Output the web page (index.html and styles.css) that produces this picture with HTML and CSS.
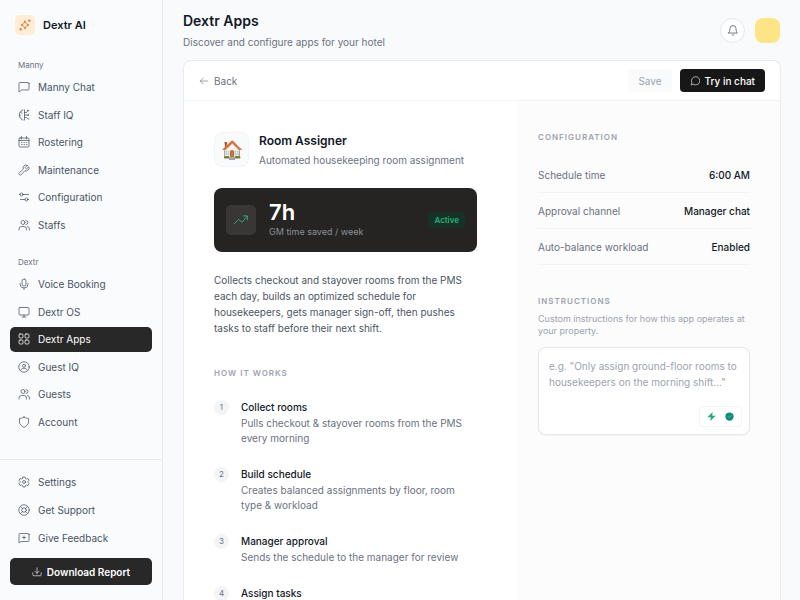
FILE: index.html
```html
<!DOCTYPE html>
<html lang="en">
<head>
  <meta charset="UTF-8">
  <meta name="viewport" content="width=device-width, initial-scale=1">
  <title>Dextr Apps</title>
  <link rel="stylesheet" href="styles.css">
</head>
<body>
<div class="app">

  <!-- Sidebar -->
  <aside class="sidebar">
    <div class="brand">
      <span class="brand-icon">
        <svg viewBox="0 0 24 24"><path d="M12 4l2 4.500a3 3 0 0 0 1.500 1.500L20 12l-4.500 2a3 3 0 0 0-1.500 1.500L12 20l-2-4.500A3 3 0 0 0 8.500 14L4 12l4.500-2A3 3 0 0 0 10 8.500z"/><path d="M20.500 1.500v4M18.500 3.500h4M3.500 18.500v4M1.500 20.500h4"/></svg>
      </span>
      Dextr AI
    </div>

    <nav class="nav">
      <h2 class="nav-title">Manny</h2>
      <ul class="nav-list">
        <li><a class="nav-link" href="#"><svg viewBox="0 0 24 24"><path d="M22 5v11a2 2 0 0 1-2 2H7l-5 4V5a2 2 0 0 1 2-2h16a2 2 0 0 1 2 2z"/></svg>Manny Chat</a></li>
        <li><a class="nav-link" href="#"><svg viewBox="0 0 24 24"><path d="M10 2C7 2 6 4 6 6 3 6 2 9 3 12c-2 3 0 6 3 6 0 2 1 4 4 4M6 6c0 2 1 3 2 3M3 12c2 0 3 1 3 2"/><path d="M13 2v20M13 7h4l2-3M13 12h5M13 17h4l3 3h2"/><circle cx="20" cy="3" r="1"/><circle cx="20" cy="12" r="1"/></svg>Staff IQ</a></li>
        <li><a class="nav-link" href="#"><svg viewBox="0 0 24 24"><rect x="2" y="4" width="20" height="18" rx="2"/><path d="M7 1v5M17 1v5M2 9h20M7 13h1M12 13h1M17 13h1M7 17h1M12 17h1M17 17h1"/></svg>Rostering</a></li>
        <li><a class="nav-link" href="#"><svg viewBox="0 0 24 24"><path d="M14.700 6.300a1 1 0 0 0 0 1.400l1.600 1.600a1 1 0 0 0 1.400 0l3.800-3.800a6 6 0 0 1-7.900 7.900l-6.900 7.900a2.100 2.100 0 0 1-4-4l7.900-6.900a6 6 0 0 1 7.900-7.900z"/></svg>Maintenance</a></li>
        <li><a class="nav-link" href="#"><svg viewBox="0 0 24 24"><circle cx="7" cy="7" r="3"/><circle cx="17" cy="17" r="3"/><path d="M10 7h11M5 17h9M3 7h1M20 17h1"/></svg>Configuration</a></li>
        <li><a class="nav-link" href="#"><svg viewBox="0 0 24 24"><circle cx="10" cy="7" r="4"/><path d="M2 22v-2a5 5 0 0 1 5-5h5a5 5 0 0 1 5 5v2M16 3a4 4 0 0 1 0 8M19 15a5 5 0 0 1 4 5v2"/></svg>Staffs</a></li>
      </ul>

      <h2 class="nav-title">Dextr</h2>
      <ul class="nav-list">
        <li><a class="nav-link" href="#"><svg viewBox="0 0 24 24"><rect x="8" y="2" width="8" height="14" rx="4"/><path d="M4 11v1a8 8 0 0 0 16 0v-1M12 20v3"/></svg>Voice Booking</a></li>
        <li><a class="nav-link" href="#"><svg viewBox="0 0 24 24"><rect x="2" y="3" width="20" height="15" rx="2"/><path d="M12 18v4M8 22h8"/></svg>Dextr OS</a></li>
        <li><a class="nav-link active" href="#" aria-current="page"><svg viewBox="0 0 24 24"><rect x="2" y="2" width="8" height="8" rx="2"/><rect x="14" y="2" width="8" height="8" rx="2"/><rect x="2" y="14" width="8" height="8" rx="2"/><rect x="14" y="14" width="8" height="8" rx="2"/></svg>Dextr Apps</a></li>
        <li><a class="nav-link" href="#"><svg viewBox="0 0 24 24"><circle cx="12" cy="12" r="10.500"/><circle cx="12" cy="9.500" r="3"/><path d="M6 18c1-5 11-5 12 0"/></svg>Guest IQ</a></li>
        <li><a class="nav-link" href="#"><svg viewBox="0 0 24 24"><circle cx="10" cy="7" r="4"/><path d="M2 22v-2a5 5 0 0 1 5-5h5a5 5 0 0 1 5 5v2M16 3a4 4 0 0 1 0 8M19 15a5 5 0 0 1 4 5v2"/></svg>Guests</a></li>
        <li><a class="nav-link" href="#"><svg viewBox="0 0 24 24"><path d="M12 2c3 2 6 3 9 3v7c0 5-4 8-9 11-5-3-9-6-9-11V5c3 0 6-1 9-3z"/></svg>Account</a></li>
      </ul>
    </nav>

    <div class="sidebar-footer">
      <ul class="nav-list nav-list-short">
        <li><a class="nav-link" href="#"><svg viewBox="0 0 24 24"><path d="M10 2h4l1 3 2 1 3-1 2 4-2 2v2l2 2-2 4-3-1-2 1-1 3h-4l-1-3-2-1-3 1-2-4 2-2v-2L2 9l2-4 3 1 2-1z"/><circle cx="12" cy="12" r="3"/></svg>Settings</a></li>
        <li><a class="nav-link" href="#"><svg viewBox="0 0 24 24"><circle cx="12" cy="12" r="10.500"/><circle cx="12" cy="12" r="4.500"/><path d="M5 5l4 4M15 15l4 4M19 5l-4 4M9 15l-4 4"/></svg>Get Support</a></li>
        <li><a class="nav-link" href="#"><svg viewBox="0 0 24 24"><path d="M22 5v12a2 2 0 0 1-2 2H6l-4 3V5a2 2 0 0 1 2-2h16a2 2 0 0 1 2 2zM12 8v6M9 11h6"/></svg>Give Feedback</a></li>
      </ul>
      <button class="download" type="button">
        <svg viewBox="0 0 24 24"><path d="M12 2v13M7 10l5 5 5-5M2 14v5a2 2 0 0 0 2 2h16a2 2 0 0 0 2-2v-5"/></svg>
        Download Report
      </button>
    </div>
  </aside>

  <!-- Main area -->
  <main class="main">
    <header class="page-header">
      <div>
        <h1>Dextr Apps</h1>
        <p class="subtitle">Discover and configure apps for your hotel</p>
      </div>
      <div class="header-actions">
        <button class="bell" type="button" aria-label="Notifications">
          <svg viewBox="0 0 24 24"><path d="M3 18h18c-2-2-3-4-3-9a6 6 0 0 0-12 0c0 5-1 7-3 9zM10 21.500c1 1 3 1 4 0"/></svg>
        </button>
        <button class="avatar" type="button" aria-label="Profile"></button>
      </div>
    </header>

    <section class="card">
      <div class="toolbar">
        <a class="back" href="#"><svg viewBox="0 0 24 24"><path d="M21 12H3M10 5l-7 7 7 7"/></svg>Back</a>
        <div class="toolbar-actions">
          <button class="save" type="button" disabled>Save</button>
          <button class="try" type="button">
            <svg viewBox="0 0 24 24"><path d="M3 21l1.500-5A10 10 0 1 1 8 20z"/></svg>
            Try in chat
          </button>
        </div>
      </div>

      <div class="columns">
        <div class="details">
          <div class="app-head">
            <span class="app-icon">🏠</span>
            <div>
              <h2>Room Assigner</h2>
              <p>Automated housekeeping room assignment</p>
            </div>
          </div>

          <div class="stat">
            <span class="stat-icon"><svg viewBox="0 0 24 24"><path d="M1 18l7-7 6 5 8-10M16 5h7v7"/></svg></span>
            <div class="stat-text">
              <strong>7h</strong>
              <span>GM time saved / week</span>
            </div>
            <span class="badge">Active</span>
          </div>

          <p class="description">Collects checkout and stayover rooms from the PMS each day, builds an optimized schedule for housekeepers, gets manager sign-off, then pushes tasks to staff before their next shift.</p>

          <h3 class="section-title">How it works</h3>
          <ol class="steps">
            <li>
              <span class="step-number">1</span>
              <div>
                <h4>Collect rooms</h4>
                <p>Pulls checkout &amp; stayover rooms from the PMS every morning</p>
              </div>
            </li>
            <li>
              <span class="step-number">2</span>
              <div>
                <h4>Build schedule</h4>
                <p>Creates balanced assignments by floor, room type &amp; workload</p>
              </div>
            </li>
            <li>
              <span class="step-number">3</span>
              <div>
                <h4>Manager approval</h4>
                <p>Sends the schedule to the manager for review</p>
              </div>
            </li>
            <li>
              <span class="step-number">4</span>
              <div>
                <h4>Assign tasks</h4>
              </div>
            </li>
          </ol>
        </div>

        <div class="config">
          <h3 class="section-title">Configuration</h3>
          <dl class="config-list">
            <div><dt>Schedule time</dt><dd>6:00 AM</dd></div>
            <div><dt>Approval channel</dt><dd>Manager chat</dd></div>
            <div><dt>Auto-balance workload</dt><dd>Enabled</dd></div>
          </dl>

          <h3 class="section-title"><label for="instructions">Instructions</label></h3>
          <p class="hint">Custom instructions for how this app operates at your property.</p>
          <div class="instructions">
            <textarea id="instructions" rows="3" placeholder="e.g. &quot;Only assign ground-floor rooms to housekeepers on the morning shift...&quot;"></textarea>
            <div class="tools">
              <svg class="bolt" viewBox="0 0 24 24"><path d="M15 0L1 14h9l-1 10 14-14h-9z"/></svg>
              <svg class="check" viewBox="0 0 24 24"><circle cx="12" cy="12" r="11"/><path d="M8 12l3 3 6-6"/></svg>
            </div>
          </div>
        </div>
      </div>
    </section>
  </main>
</div>
</body>
</html>
```

FILE: styles.css
```css
* {
  box-sizing: border-box;
}

body {
  margin: 0;
  font-family: Inter, "Liberation Sans", sans-serif;
  font-size: 10px;
  line-height: 16px;
  color: #4b5563;
  background: #f9fafb;
}

h1, h2, h3, h4, p, ul, ol, dl, dd {
  margin: 0;
  padding: 0;
}

ul, ol {
  list-style: none;
}

a {
  color: inherit;
  text-decoration: none;
}

button {
  border: 0;
  font: inherit;
  cursor: pointer;
}

svg {
  display: block;
  flex: none;
  width: 12px;
  height: 12px;
  fill: none;
  stroke: currentColor;
  stroke-width: 1.5;
  stroke-linecap: round;
  stroke-linejoin: round;
}

.app {
  display: flex;
  height: 100vh;
  overflow: hidden;
}

/* Sidebar */
.sidebar {
  display: flex;
  flex-direction: column;
  flex: none;
  width: 163px;
  background: #f9fbfd;
  border-right: 1px solid #e8ebef;
}

.brand {
  display: flex;
  align-items: center;
  gap: 8px;
  padding: 15px 15px 0;
  font-size: 11px;
  line-height: 20px;
  font-weight: 600;
  color: #111827;
}

.brand-icon {
  display: grid;
  place-items: center;
  width: 20px;
  height: 20px;
  border-radius: 5px;
  background: #ffedd5;
  color: #dd7845;
}

.brand-icon svg {
  stroke-width: 2;
}

.nav {
  flex: 1;
  padding: 22px 10px 0;
}

.nav-title {
  padding: 0 8px;
  font-size: 8px;
  font-weight: 400;
  color: #6b7280;
}

.nav-list {
  display: grid;
  grid-auto-rows: 1fr;
  gap: 3px;
  min-height: 162px;
  margin: 2px 0 17px;
}

.nav-link {
  display: flex;
  align-items: center;
  gap: 8px;
  height: 100%;
  padding: 0 8px;
  border-radius: 5px;
}

.nav-link.active {
  background: #282828;
  color: #fff;
}

.sidebar-footer {
  padding: 10px 10px 15px;
  border-top: 1px solid #e8ebef;
}

.nav-list-short {
  min-height: 80px;
  margin: 0 0 8px;
}

.download {
  display: flex;
  align-items: center;
  justify-content: center;
  gap: 5px;
  width: 100%;
  height: 27px;
  border-radius: 5px;
  background: #282828;
  color: #fff;
  font-weight: 600;
}

.download svg {
  width: 10px;
  height: 10px;
}

/* Page header */
.main {
  display: flex;
  flex-direction: column;
  flex: 1;
  min-width: 0;
  padding: 10px 19px 0 20px;
}

.page-header {
  display: flex;
  align-items: center;
  justify-content: space-between;
  margin-bottom: 10px;
  padding-right: 1px;
}

h1 {
  margin-bottom: 2px;
  font-size: 14px;
  line-height: 22px;
  font-weight: 600;
  color: #111827;
}

.subtitle {
  color: #6b7280;
}

.header-actions {
  display: flex;
  gap: 10px;
}

.bell,
.avatar {
  display: grid;
  place-items: center;
  width: 25px;
  height: 25px;
  padding: 0;
}

.bell {
  border: 1px solid #e5e7eb;
  border-radius: 50%;
  background: #fff;
  color: #4b5563;
}

.avatar {
  border-radius: 8px;
  background: #fde587;
}

/* Card */
.card {
  display: flex;
  flex-direction: column;
  flex: 1;
  min-height: 0;
  overflow: hidden;
  border: 1px solid #e8ebef;
  border-bottom: 0;
  border-radius: 8px 8px 0 0;
  background: #fff;
}

.toolbar {
  display: flex;
  align-items: center;
  justify-content: space-between;
  flex: none;
  height: 40px;
  padding: 0 15px;
  border-bottom: 1px solid #f3f4f6;
}

.back {
  display: flex;
  align-items: center;
  gap: 5px;
  color: #6b7280;
}

.back svg {
  width: 10px;
  height: 10px;
}

.toolbar-actions {
  display: flex;
  gap: 8px;
}

.save,
.try {
  display: flex;
  align-items: center;
  gap: 5px;
  height: 23px;
  padding: 0 10px;
  border-radius: 4px;
}

.save {
  background: #f9fafb;
  color: #9ca3af;
}

.try {
  background: #171717;
  color: #fff;
  font-weight: 500;
}

.try svg {
  width: 10px;
  height: 10px;
}

.columns {
  display: grid;
  grid-template-columns: minmax(0, 1fr) 263px;
  flex: 1;
  min-height: 0;
}

/* App details */
.details {
  min-height: 0;
  padding: 30px 40px 0 30px;
  overflow: hidden;
}

.app-head {
  display: flex;
  align-items: center;
  gap: 10px;
  margin-bottom: 20px;
}

.app-icon {
  display: grid;
  place-items: center;
  width: 35px;
  height: 35px;
  border: 1px solid #f3f4f6;
  border-radius: 8px;
  background: #f9fafb;
  font-size: 18px;
}

.app-head h2 {
  margin-bottom: 1px;
  font-size: 12px;
  line-height: 20px;
  font-weight: 600;
  color: #111827;
}

.app-head p {
  color: #6b7280;
}

.stat {
  display: flex;
  align-items: center;
  gap: 13px;
  height: 64px;
  margin-bottom: 20px;
  padding: 0 12px;
  border-radius: 8px;
  background: #262422;
}

.stat-icon {
  display: grid;
  place-items: center;
  width: 30px;
  height: 30px;
  border-radius: 5px;
  background: #393735;
  color: #34b77f;
}

.stat-icon svg {
  width: 14px;
  height: 14px;
}

.stat-text {
  flex: 1;
}

.stat-text strong {
  display: block;
  font-size: 22px;
  line-height: 24px;
  font-weight: 600;
  color: #fff;
}

.stat-text span {
  display: block;
  font-size: 9px;
  color: #8b909b;
}

.badge {
  padding: 0 6px;
  border-radius: 4px;
  background: #173226;
  color: #2fae78;
  font-size: 8px;
  font-weight: 600;
}

.description {
  margin-bottom: 29px;
}

.section-title {
  font-size: 8px;
  font-weight: 600;
  letter-spacing: 1px;
  text-transform: uppercase;
  color: #9ca3af;
}

.steps {
  display: grid;
  gap: 20px;
  margin-top: 18px;
}

.steps li {
  display: flex;
  gap: 12px;
}

.step-number {
  flex: none;
  width: 15px;
  height: 15px;
  margin-top: 1px;
  border-radius: 50%;
  background: #f3f4f6;
  font-size: 8px;
  line-height: 15px;
  text-align: center;
  color: #6b7280;
}

.steps h4 {
  margin-bottom: 1px;
  font-size: 10px;
  font-weight: 500;
  line-height: 16px;
  color: #111827;
}

.steps p {
  line-height: 15px;
  color: #6b7280;
}

/* Configuration column */
.config {
  padding: 28px 30px 0 21px;
  background: #fcfcfc;
}

.config-list {
  margin: 12px 0 28px;
}

.config-list div {
  display: flex;
  justify-content: space-between;
  padding: 10px 0 9px;
  border-bottom: 1px solid #f3f4f6;
}

.config-list dt {
  color: #6b7280;
}

.config-list dd {
  font-weight: 500;
  color: #111827;
}

.hint {
  margin: 4px 0 10px;
  font-size: 9px;
  line-height: 12px;
  color: #9ca3af;
}

.instructions {
  padding: 10px 7px 7px 10px;
  border: 1px solid #e5e7eb;
  border-radius: 8px;
  background: #fff;
  box-shadow: 0 1px 2px rgba(0, 0, 0, 0.05);
}

.instructions textarea {
  display: block;
  width: 100%;
  padding: 0;
  border: 0;
  outline: 0;
  resize: none;
  background: none;
  font: inherit;
  color: #111827;
}

.instructions textarea::placeholder {
  color: #9ca3af;
}

.tools {
  display: flex;
  gap: 9px;
  width: fit-content;
  margin-left: auto;
  padding: 5px 7px;
  border: 1px solid #f3f4f6;
  border-radius: 4px;
}

.tools svg {
  width: 9px;
  height: 9px;
}

.bolt {
  fill: #26ab80;
  stroke: none;
}

.check {
  fill: #0f8b7c;
  stroke: none;
}

.check path {
  fill: none;
  stroke: #7fd0b8;
}
```
